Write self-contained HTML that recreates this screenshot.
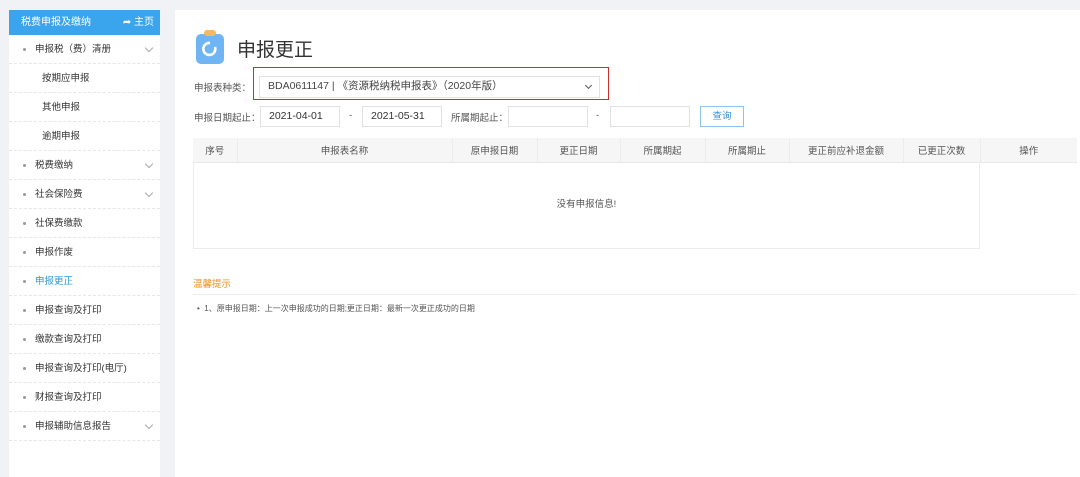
<!DOCTYPE html>
<html><head><meta charset="utf-8"><style>
*{margin:0;padding:0;box-sizing:border-box}
body{width:1080px;height:477px;background:#f0f2f5;font-family:"Liberation Sans","Noto Sans CJK SC",sans-serif;font-size:10px;color:#333;position:relative;overflow:hidden}
.a{position:absolute}
.side{left:9px;top:10px;width:151px;height:467px;background:#fff}
.sh{height:25px;background:#3aa4ec;color:#fff;font-size:10px;line-height:25px;padding-left:12px;position:relative}
.sh span{position:absolute;right:6px;top:0}
.it{height:29px;line-height:29px;border-bottom:1px dashed #e6e6e6;padding-left:26px;position:relative;font-size:9.5px;color:#333}
.it.d:before{content:"";position:absolute;left:14px;top:13px;width:3px;height:3px;border-radius:50%;background:#999}
.it.s{padding-left:33px}
.it .ch{position:absolute;right:8px;top:10px;width:6px;height:6px;border-right:1px solid #aaa;border-bottom:1px solid #aaa;transform:rotate(45deg)}
.main{left:175px;top:10px;width:905px;height:467px;background:#fff}
.inp{border:1px solid #e2e2e2;height:21px;line-height:19px;padding-left:8px;font-size:10.5px;background:#fff}
.lbl{font-size:9.5px;color:#555}
table{border-collapse:collapse;font-size:9.5px;color:#555}
th{background:#f6f6f6;font-weight:normal;height:24px;border-right:1px solid #ececec;border-bottom:1px solid #e8e8e8}
</style></head><body>
<div class="a side">
<div class="sh">税费申报及缴纳<span>➦ 主页</span></div>
<div class="it d">申报税（费）清册<i class="ch"></i></div>
<div class="it s">按期应申报</div>
<div class="it s">其他申报</div>
<div class="it s">逾期申报</div>
<div class="it d">税费缴纳<i class="ch"></i></div>
<div class="it d">社会保险费<i class="ch"></i></div>
<div class="it d">社保费缴款</div>
<div class="it d">申报作废</div>
<div class="it d" style="color:#2b9bd8">申报更正</div>
<div class="it d">申报查询及打印</div>
<div class="it d">缴款查询及打印</div>
<div class="it d">申报查询及打印(电厅)</div>
<div class="it d">财报查询及打印</div>
<div class="it d">申报辅助信息报告<i class="ch"></i></div>
</div>
<div class="a main"></div>
<svg class="a" style="left:196px;top:30px" width="28" height="34" viewBox="0 0 28 34">
<rect x="0" y="4" width="28" height="30" rx="5" fill="#6fb5f3"/>
<rect x="8" y="0" width="12" height="6" rx="3" fill="#f5b860"/>
<path d="M19 17 A6 6 0 1 1 14 13" stroke="#fff" stroke-width="2.6" fill="none"/>
</svg>
<div class="a" style="left:237px;top:35px;font-size:19px;color:#333">申报更正</div>
<div class="a lbl" style="left:194px;top:80px">申报表种类：</div>
<div class="a" style="left:253px;top:67px;width:356px;height:33px;border:1.5px solid #c9302c"></div>
<div class="a inp" style="left:259px;top:76px;width:341px;height:22px;color:#444">BDA0611147 | 《资源税纳税申报表》（2020年版）</div>
<div class="a" style="left:586px;top:83px;width:5px;height:5px;border-right:1px solid #555;border-bottom:1px solid #555;transform:rotate(45deg)"></div>
<div class="a lbl" style="left:194px;top:110px">申报日期起止：</div>
<div class="a inp" style="left:260px;top:106px;width:80px">2021-04-01</div>
<div class="a lbl" style="left:349px;top:110px">-</div>
<div class="a inp" style="left:362px;top:106px;width:80px">2021-05-31</div>
<div class="a lbl" style="left:451px;top:110px">所属期起止：</div>
<div class="a inp" style="left:508px;top:106px;width:80px"></div>
<div class="a lbl" style="left:596px;top:110px">-</div>
<div class="a inp" style="left:610px;top:106px;width:80px"></div>
<div class="a" style="left:700px;top:106px;width:44px;height:21px;border:1px solid #8cc4ee;color:#3a8fd0;font-size:9.5px;text-align:center;line-height:19px">查询</div>
<table class="a" style="left:193px;top:138px;width:884px">
<tr><th style="width:44px">序号</th><th style="width:215px">申报表名称</th><th style="width:85px">原申报日期</th><th style="width:83px">更正日期</th><th style="width:85px">所属期起</th><th style="width:84px">所属期止</th><th style="width:114px">更正前应补退金额</th><th style="width:77px">已更正次数</th><th style="border-right:none">操作</th></tr>
</table>
<div class="a" style="left:193px;top:162px;width:787px;height:87px;border:1px solid #ececec;border-top:none;text-align:center;line-height:86px;font-size:9.5px;color:#555">没有申报信息!</div>
<div class="a" style="left:193px;top:276px;font-size:9.5px;color:#f0901c">温馨提示</div>
<div class="a" style="left:193px;top:294px;width:884px;border-top:1px solid #ececec"></div>
<div class="a" style="left:197px;top:303px;font-size:8px;color:#555">•&nbsp; 1、原申报日期：上一次申报成功的日期;更正日期：最新一次更正成功的日期</div>
</body></html>
